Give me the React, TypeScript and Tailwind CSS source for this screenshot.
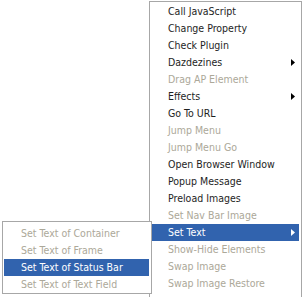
import React from 'react';

type Item = { label: string; disabled?: boolean; submenu?: boolean; active?: boolean };

const mainItems: Item[] = [
  { label: 'Call JavaScript' },
  { label: 'Change Property' },
  { label: 'Check Plugin' },
  { label: 'Dazdezines', submenu: true },
  { label: 'Drag AP Element', disabled: true },
  { label: 'Effects', submenu: true },
  { label: 'Go To URL' },
  { label: 'Jump Menu', disabled: true },
  { label: 'Jump Menu Go', disabled: true },
  { label: 'Open Browser Window' },
  { label: 'Popup Message' },
  { label: 'Preload Images' },
  { label: 'Set Nav Bar Image', disabled: true },
  { label: 'Set Text', submenu: true, active: true },
  { label: 'Show-Hide Elements', disabled: true },
  { label: 'Swap Image', disabled: true },
  { label: 'Swap Image Restore', disabled: true },
];

const subItems: Item[] = [
  { label: 'Set Text of Container', disabled: true },
  { label: 'Set Text of Frame', disabled: true },
  { label: 'Set Text of Status Bar', active: true },
  { label: 'Set Text of Text Field', disabled: true },
];

function Arrow({ white }: { white?: boolean }) {
  return (
    <svg width="4" height="7" viewBox="0 0 4 7" className="shrink-0">
      <path d="M0 0 L4 3.5 L0 7 Z" fill={white ? '#ffffff' : '#000000'} />
    </svg>
  );
}

function MenuRow({ item, padLeft }: { item: Item; padLeft: string }) {
  const color = item.active ? 'bg-[#3163ae] text-white' : item.disabled ? 'text-[#aca899]' : 'text-[#1e1e1e]';
  return (
    <div className={`flex h-[17px] items-center justify-between pr-[4px] ${padLeft} ${color}`}>
      <span className="whitespace-nowrap leading-[17px]">{item.label}</span>
      {item.submenu && <Arrow white={item.active} />}
    </div>
  );
}

export default function App() {
  return (
    <div
      className="relative h-[297px] w-[303px] overflow-hidden bg-white text-[10.5px]"
      style={{ fontFamily: '"DejaVu Sans Condensed", "DejaVu Sans", sans-serif' }}
    >
      {/* main behaviours menu */}
      <div className="absolute left-[149px] top-[1px] h-[310px] w-[153px] border border-[#a7a7a7] bg-white px-[2px] pt-[1px]">
        {mainItems.map((item) => (
          <MenuRow key={item.label} item={item} padLeft="pl-[16px]" />
        ))}
      </div>

      {/* Set Text submenu */}
      <div className="absolute left-[2px] top-[221px] w-[150px] border border-[#a7a7a7] bg-white pl-[1px] pr-[2px] pt-[3px]">
        {subItems.map((item) => (
          <MenuRow key={item.label} item={item} padLeft="pl-[17px]" />
        ))}
      </div>
    </div>
  );
}
